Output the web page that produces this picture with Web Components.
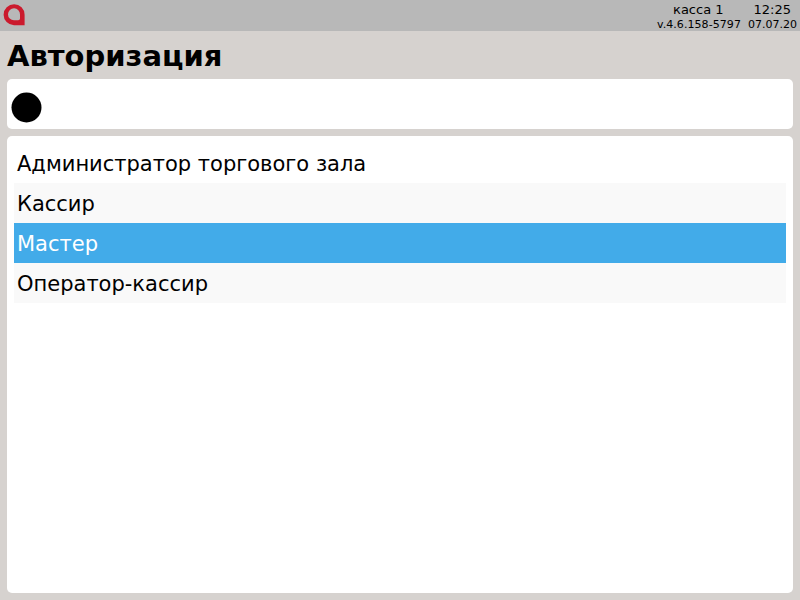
<!DOCTYPE html>
<html lang="ru">
<head>
<meta charset="utf-8">
<title>Авторизация</title>
<style>
  html, body { margin: 0; height: 100%; }
  body {
    background: #d6d2cf;
    font-family: "DejaVu Sans", sans-serif;
    color: #000;
  }
  auth-screen { height: 600px; }
</style>
</head>
<body>
<auth-screen>
  <top-bar slot="bar" register="касса 1" time="12:25" version="v.4.6.158-5797" date="07.07.20"></top-bar>
  <span slot="title">Авторизация</span>
  <pin-card slot="pin" filled="1"></pin-card>
  <role-list slot="list">
    <role-item>Администратор торгового зала</role-item>
    <role-item stripe>Кассир</role-item>
    <role-item selected>Мастер</role-item>
    <role-item stripe>Оператор-кассир</role-item>
  </role-list>
</auth-screen>

<script>
customElements.define('top-bar',
  class extends HTMLElement {
    constructor() {
      super()
      this.attachShadow({ mode: 'open' }).innerHTML = `
      <style>
        :host {
          display: flex;
          justify-content: space-between;
          height: 31px;
          background: #b8b8b8;
        }
        svg { margin: 4px 0 0 3px; width: 22px; height: 22px; }
        .info {
          display: flex;
          flex-direction: column;
          padding: 2px 3px 0 0;
          font-size: 11px;
          line-height: 15px;
        }
        .row { display: flex; justify-content: flex-end; white-space: pre; }
        .top { font-size: 13px; line-height: 15px; padding-right: 6px; }
        .top span:first-child { margin-right: 30px; }
        .version { margin-right: 7px; letter-spacing: 0.07px; }
      </style>
      <svg viewBox="0 0 22 22">
        <path fill="#cb1a2d" fill-rule="evenodd" d="M21.6 21.2H11A10.5 10.5 0 1 1 21.6 10.7ZM17 10.5V14.6Q17 16.3 15.2 16.3H11A6 6 0 1 1 17 10.5Z"/>
      </svg>
      <div class="info">
        <div class="row top"><span>${this.getAttribute('register')}</span><span>${this.getAttribute('time')}</span></div>
        <div class="row"><span class="version">${this.getAttribute('version')}</span><span>${this.getAttribute('date')}</span></div>
      </div>`
    }
  }
)

customElements.define('pin-card',
  class extends HTMLElement {
    constructor() {
      super()
      this.attachShadow({ mode: 'open' }).innerHTML = `
      <style>
        :host {
          display: flex;
          align-items: center;
          gap: 8px;
          height: 50px;
          padding: 7px 0 0 4px;
          background: #fff;
          border-radius: 5px;
          box-sizing: border-box;
        }
        svg { width: 31px; height: 31px; }
      </style>`
      const count = Number(this.getAttribute('filled'))
      for (let i = 0; i < count; i++) {
        this.shadowRoot.innerHTML += '<svg viewBox="0 0 31 31"><circle cx="15.5" cy="15.5" r="15"/></svg>'
      }
    }
  }
)

customElements.define('role-item',
  class extends HTMLElement {
    constructor() {
      super()
      this.attachShadow({ mode: 'open' }).innerHTML = `
      <style>
        :host {
          display: flex;
          align-items: center;
          height: 40px;
          box-sizing: border-box;
          padding: 2px 0 0 3px;
          font-size: 21px;
          color: #000;
        }
        :host([stripe]) { background: #f9f9f9; }
        :host([selected]) { background: #42abe9; color: #fff; }
      </style>
      <slot></slot>`
    }
  }
)

customElements.define('role-list',
  class extends HTMLElement {
    constructor() {
      super()
      this.attachShadow({ mode: 'open' }).innerHTML = `
      <style>
        :host {
          display: flex;
          flex-direction: column;
          flex: 1;
          padding: 7px;
          background: #fff;
          border-radius: 5px;
        }
      </style>
      <slot></slot>`
    }
  }
)

customElements.define('auth-screen',
  class extends HTMLElement {
    constructor() {
      super()
      this.attachShadow({ mode: 'open' }).innerHTML = `
      <style>
        :host { display: flex; flex-direction: column; }
        .title {
          height: 48px;
          box-sizing: border-box;
          padding: 2px 0 0 7px;
          display: flex;
          align-items: center;
          font-size: 29px;
          font-weight: bold;
        }
        .body {
          flex: 1;
          display: flex;
          flex-direction: column;
          gap: 7px;
          padding: 0 7px 7px;
        }
        ::slotted([slot="list"]) { flex: 1; }
      </style>
      <slot name="bar"></slot>
      <div class="title"><slot name="title"></slot></div>
      <div class="body">
        <slot name="pin"></slot>
        <slot name="list"></slot>
      </div>`
    }
  }
)
</script>
</body>
</html>
